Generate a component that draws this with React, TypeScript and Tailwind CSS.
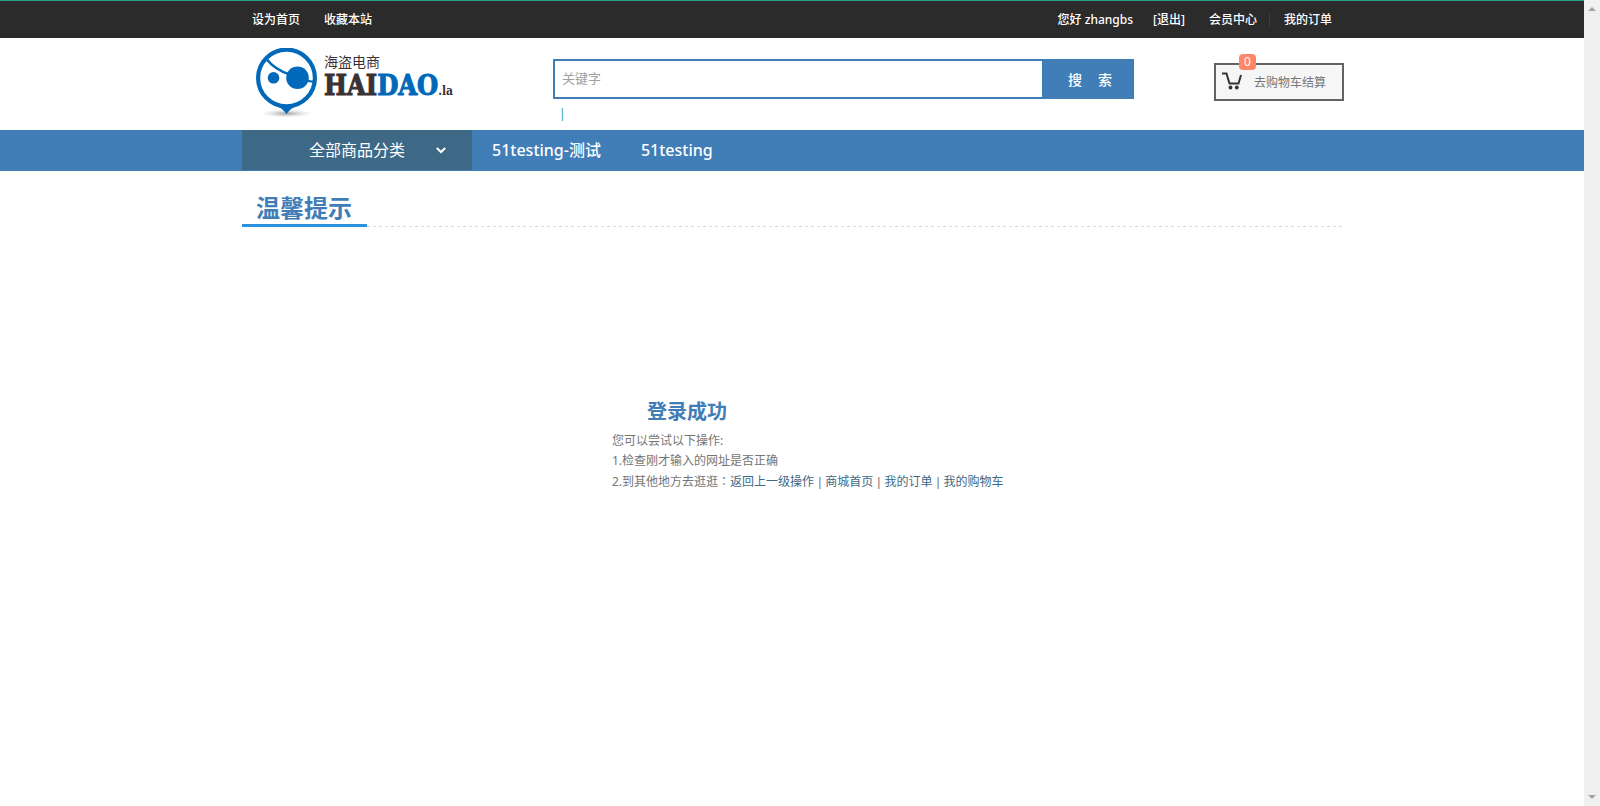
import React from "react";

const BODY_FONT =
  "font-['Noto_Sans','Noto_Sans_CJK_SC',sans-serif]";

function Logo() {
  return (
    <a href="#" className="flex w-[204px] shrink-0 items-start gap-1" aria-label="海盗电商 HAIDAO.la">
      <svg viewBox="0 0 66 70" className="h-[70px] w-[66px] shrink-0" aria-hidden="true">
        <defs>
          <radialGradient id="pin-shadow">
            <stop offset="0" stopColor="#000" stopOpacity="0.35" />
            <stop offset="0.6" stopColor="#000" stopOpacity="0.1" />
            <stop offset="1" stopColor="#000" stopOpacity="0" />
          </radialGradient>
        </defs>
        <ellipse cx="32.500" cy="65.500" rx="25" ry="4" fill="url(#pin-shadow)" />
        <path d="M18 55 Q28 59.500 32.500 66 Q37 59.500 47 55 Z" fill="#0069b9" />
        <circle cx="32.500" cy="30" r="28.400" fill="#fff" stroke="#0069b9" strokeWidth="4.200" />
        <path d="M12 10.500 Q21 22 36 26.500" fill="none" stroke="#0069b9" strokeWidth="2.600" />
        <path d="M52 32 Q56 34 61 33.600" fill="none" stroke="#0069b9" strokeWidth="2.200" />
        <circle cx="43.500" cy="29.800" r="11.300" fill="#0069b9" />
        <circle cx="19.500" cy="29.800" r="5.800" fill="#0069b9" />
      </svg>
      <span className="flex flex-col pt-[7px] text-[#3a3134]">
        <span className="text-sm leading-[14px] whitespace-nowrap">海盗电商</span>
        <span className="flex items-baseline pt-[3px] font-['DejaVu_Serif_Condensed','Liberation_Serif',serif] text-[27px] leading-[28px] font-bold whitespace-nowrap">
          <span className="[-webkit-text-stroke:1px_#3a3134]">HAI</span>
          <span className="text-[#0069b9] [-webkit-text-stroke:1px_#0069b9]">DAO</span>
          <span className="text-xs leading-4">.la</span>
        </span>
      </span>
    </a>
  );
}

function TopBar() {
  return (
    <div className="border-t border-[#27a287] bg-[#2b2b2b] px-4 text-xs font-medium text-white">
      <div className="mx-auto flex h-[37px] max-w-[1100px] items-center justify-between">
        <div className="flex gap-6 pl-[10px]">
          <a href="#">设为首页</a>
          <a href="#">收藏本站</a>
        </div>
        <div className="flex items-center pr-[10px]">
          <span className="mr-5">您好 zhangbs</span>
          <a href="#" className="mr-6">[退出]</a>
          <a href="#" className="mr-3">会员中心</a>
          <span className="mr-[14px] h-3 w-px bg-[#3c3f44]" />
          <a href="#">我的订单</a>
        </div>
      </div>
    </div>
  );
}

function Header() {
  return (
    <header className="px-4">
      <div className="mx-auto flex h-[92px] max-w-[1104px] items-start">
        <div className="pt-[10px] pl-[14px]">
          <Logo />
        </div>
        <form className="ml-auto pt-[21px]" onSubmit={(e) => e.preventDefault()}>
          <div className="flex h-10">
            <input
              type="text"
              aria-label="关键字"
              placeholder="关键字"
              className="w-[489px] border-2 border-r-0 border-[#417db7] bg-white pl-[7px] text-[13px] text-[#555] outline-none placeholder:text-[#a0a0a0]"
            />
            <button
              type="submit"
              className="flex w-[92px] items-center justify-center gap-4 bg-[#417db7] pt-px pl-1 text-sm font-medium text-white"
            >
              <span>搜</span>
              <span>索</span>
            </button>
          </div>
          <div className="pt-[5px] pl-[6px] text-xs leading-5 text-[#27a287]">|</div>
        </form>
        <a
          href="#"
          className="relative mt-[25px] ml-20 flex h-[38px] w-[130px] items-center border-2 border-[#636363] bg-[#f6f6f6] pl-[6px] text-xs text-[#757575]"
        >
          <svg viewBox="0 0 20 18" className="mb-[2px] h-[18px] w-5 shrink-0" aria-hidden="true">
            <path d="M0 1.500 H4.500 L7.500 11.500 H16.500 L19 3" fill="none" stroke="#333" strokeWidth="2" />
            <circle cx="8.500" cy="15.500" r="1.900" fill="#333" />
            <circle cx="14.800" cy="15.500" r="1.900" fill="#333" />
          </svg>
          <span className="ml-3 pt-[2px] whitespace-nowrap">去购物车结算</span>
          <span className="absolute -top-[11px] left-[23px] flex h-4 w-[17px] items-center justify-center rounded bg-[#ff8765] text-xs text-white">
            0
          </span>
        </a>
      </div>
    </header>
  );
}

function Nav() {
  return (
    <nav className="bg-[#417db7] px-4 pb-px text-base text-white">
      <div className="mx-auto flex h-10 max-w-[1100px] items-stretch">
        <button type="button" className="flex w-[230px] items-center bg-[#3d6986] pl-[67px]">
          全部商品分类
          <svg viewBox="0 0 10 7" className="ml-[31px] h-[7px] w-[10px]" aria-hidden="true">
            <path d="M0.800 1 L5 5 L9.200 1" fill="none" stroke="#fff" strokeWidth="2" />
          </svg>
        </button>
        <a href="#" className="flex items-center px-5 font-medium">51testing-测试</a>
        <a href="#" className="flex items-center px-5 font-medium">51testing</a>
      </div>
    </nav>
  );
}

function Divider() {
  return <span className="mx-1 font-['Liberation_Sans',sans-serif]">|</span>;
}

function Notice() {
  return (
    <main className="px-4">
      <div className="mx-auto max-w-[1100px] pt-5">
        <div className="flex items-end">
          <h1 className="w-[125px] border-b-[3px] border-[#2b92df] pl-[14px] text-2xl leading-[33px] font-bold whitespace-nowrap text-[#417db7]">
            温馨提示
          </h1>
          <div className="h-px flex-1 bg-[repeating-linear-gradient(90deg,#d8d8d8_0_3px,transparent_3px_6px)]" />
        </div>
        <section className="pt-[170px] pl-[370px] text-xs leading-5 text-[#757575]">
          <h2 className="pb-1 pl-[35px] text-xl leading-[30px] font-bold text-[#417db7]">登录成功</h2>
          <p>您可以尝试以下操作:</p>
          <p>1.检查刚才输入的网址是否正确</p>
          <p>
            2.到其他地方去逛逛<span className="font-['Noto_Sans_CJK_TC',sans-serif]">：</span>
            <a href="#" className="text-[#3d6986]">返回上一级操作</a>
            <Divider />
            <a href="#" className="text-[#3d6986]">商城首页</a>
            <Divider />
            <a href="#" className="text-[#3d6986]">我的订单</a>
            <Divider />
            <a href="#" className="text-[#3d6986]">我的购物车</a>
          </p>
        </section>
      </div>
    </main>
  );
}

function ScrollTrack() {
  return (
    <div className="flex w-4 shrink-0 flex-col items-center justify-between bg-[#f0f0f0] py-[7px]" aria-hidden="true">
      <svg viewBox="0 0 8 4" className="h-1 w-2"><path d="M0 4 L4 0 L8 4 Z" fill="#a3a3a3" /></svg>
      <svg viewBox="0 0 8 4" className="h-1 w-2"><path d="M0 0 L4 4 L8 0 Z" fill="#a3a3a3" /></svg>
    </div>
  );
}

export default function App() {
  return (
    <div className={`flex min-h-screen bg-white ${BODY_FONT}`}>
      <div className="min-w-0 flex-1">
        <TopBar />
        <Header />
        <Nav />
        <Notice />
      </div>
      <ScrollTrack />
    </div>
  );
}
